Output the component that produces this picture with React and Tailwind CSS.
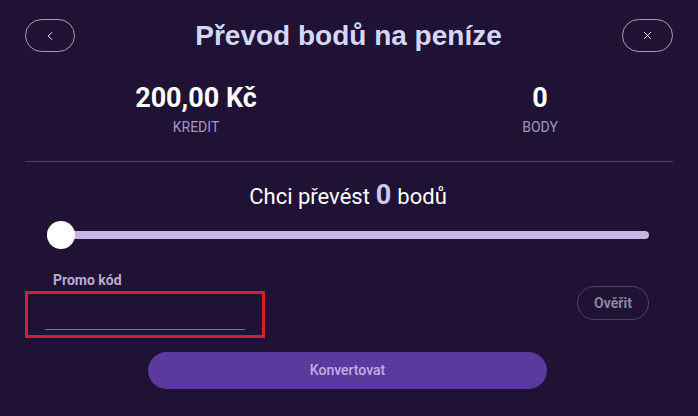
import { ChevronLeft, X } from 'lucide-react';

const roboto = { fontFamily: 'Roboto, "Liberation Sans", sans-serif' };

const Stat = ({ value, label }) => (
  <div className="flex w-[200px] flex-col items-center">
    <p className="text-[27px] font-bold leading-[30px] text-white">{value}</p>
    <p className="mt-[6px] text-[14px] leading-[16px] uppercase text-[#a596c2]">{label}</p>
  </div>
);

const App = () => {
  return (
    <div className="flex h-[416px] w-[698px] flex-col bg-[#1f1234]" style={roboto}>
      <header className="flex items-center justify-between px-[25px] pt-[19px]">
        <button className="flex h-[33px] w-[50px] items-center justify-center rounded-full border border-[#b59aa8] text-white">
          <ChevronLeft size={14} strokeWidth={1.6} />
        </button>
        <h1 className="font-['Liberation_Sans',Arial,sans-serif] text-[28px] font-bold leading-[33px] text-[#d5d7f6]">
          Převod bodů na peníze
        </h1>
        <button className="flex h-[33px] w-[51px] items-center justify-center rounded-full border border-[#b59aa8] text-white">
          <X size={13} strokeWidth={1.6} />
        </button>
      </header>

      <div className="mt-[31px] flex pl-[96px]">
        <Stat value="200,00 Kč" label="Kredit" />
        <div className="w-[144px]" />
        <Stat value="0" label="Body" />
      </div>

      <div className="mx-[25px] mt-[26px] h-px bg-[#4c3f69]" />

      <div className="mt-[19px] flex items-baseline justify-center gap-[6px] pr-[2px] text-[22px] font-normal leading-[28px] text-white">
        <span>Chci převést</span>
        <span className="text-[27px] font-bold leading-[28px] text-[#c9c9f2]">0</span>
        <span>bodů</span>
      </div>

      <div className="mt-[20px] flex items-center pl-[47px] pr-[49px]">
        <div className="relative h-[8px] flex-1 rounded-full bg-[#c5b6e2]">
          <div className="absolute left-0 top-1/2 h-[28px] w-[28px] -translate-y-1/2 rounded-full bg-white" />
        </div>
      </div>

      <div className="mt-[33px] flex items-start justify-between pl-[25px] pr-[49px]">
        <div className="flex flex-col">
          <label className="ml-[28px] text-[14px] font-bold leading-[16px] text-[#b9abd3]">Promo kód</label>
          <div className="mt-[3px] flex h-[47px] w-[240px] items-end border-[3px] border-[#d1222c] px-[17px] pb-[5px]">
            <div className="h-px w-full bg-[#7d6d9c]" />
          </div>
        </div>
        <button className="mt-[14px] flex h-[34px] w-[72px] items-center justify-center rounded-full border border-[#4f4267] text-[14px] font-bold text-[#8c879e]">
          Ověřit
        </button>
      </div>

      <div className="mt-[14px] flex justify-center pr-[3px]">
        <button className="h-[37px] w-[399px] rounded-full bg-[#5a3a9d] text-[14px] font-medium text-[#c3aee3]">
          Konvertovat
        </button>
      </div>
    </div>
  );
};

export default App;
